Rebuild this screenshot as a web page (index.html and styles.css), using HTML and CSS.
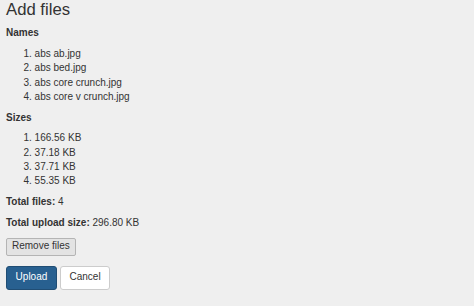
FILE: index.html
```html
<!DOCTYPE html>
<html lang="en">
<head>
<meta charset="utf-8">
<title>Add files</title>
<link rel="stylesheet" href="styles.css">
</head>
<body>
<div class="page">
  <h3 class="title">Add files</h3>
  <div class="label">Names</div>
  <ol class="list">
    <li>abs ab.jpg</li>
    <li>abs bed.jpg</li>
    <li>abs core crunch.jpg</li>
    <li>abs core v crunch.jpg</li>
  </ol>
  <div class="label">Sizes</div>
  <ol class="list">
    <li>166.56 KB</li>
    <li>37.18 KB</li>
    <li>37.71 KB</li>
    <li>55.35 KB</li>
  </ol>
  <p class="stat"><strong>Total files:</strong> 4</p>
  <p class="stat"><strong>Total upload size:</strong> 296.80 KB</p>
  <div class="remove-row">
    <button class="btn btn-remove" type="button">Remove files</button>
  </div>
  <div class="actions">
    <button class="btn btn-primary" type="button">Upload</button>
    <button class="btn btn-default" type="button">Cancel</button>
  </div>
</div>
</body>
</html>
```
FILE: styles.css
```css
html, body {
  margin: 0;
  padding: 0;
  background: #efefef;
}
body {
  font-family: "Liberation Sans", Arial, sans-serif;
  font-size: 10px;
  line-height: 14.3px;
  color: #333;
}
.page {
  padding: 0 6px;
}
.title {
  margin: 1px 0 7px 0;
  font-size: 16.7px;
  line-height: 18.4px;
  font-weight: 400;
  color: #333;
}
.label {
  font-weight: bold;
  margin-bottom: 6.4px;
}
.list {
  margin: 0 0 6.4px 0;
  padding-left: 28.6px;
}
.stat {
  margin: 0 0 7px 0;
}
.stat strong {
  font-weight: bold;
}
.remove-row {
  margin-top: 6px;
  display: flex;
}
.actions {
  display: flex;
  gap: 3px;
  margin-top: 10px;
}
.btn {
  font-family: "Liberation Sans", Arial, sans-serif;
  font-size: 10px;
  line-height: 14.3px;
  border-radius: 3px;
  border: 1px solid #ccc;
  cursor: pointer;
  margin: 0;
}
.btn-remove {
  height: 18px;
  padding: 0 5px;
  background: #e3e3e3;
  border-color: #b4b4b4;
  color: #333;
  border-radius: 2px;
}
.btn-primary {
  height: 24px;
  padding: 0 8.6px;
  background: #286090;
  border-color: #204d74;
  color: #fff;
}
.btn-default {
  height: 24px;
  padding: 0 8.6px;
  background: #fff;
  border-color: #ccc;
  color: #333;
}
```
